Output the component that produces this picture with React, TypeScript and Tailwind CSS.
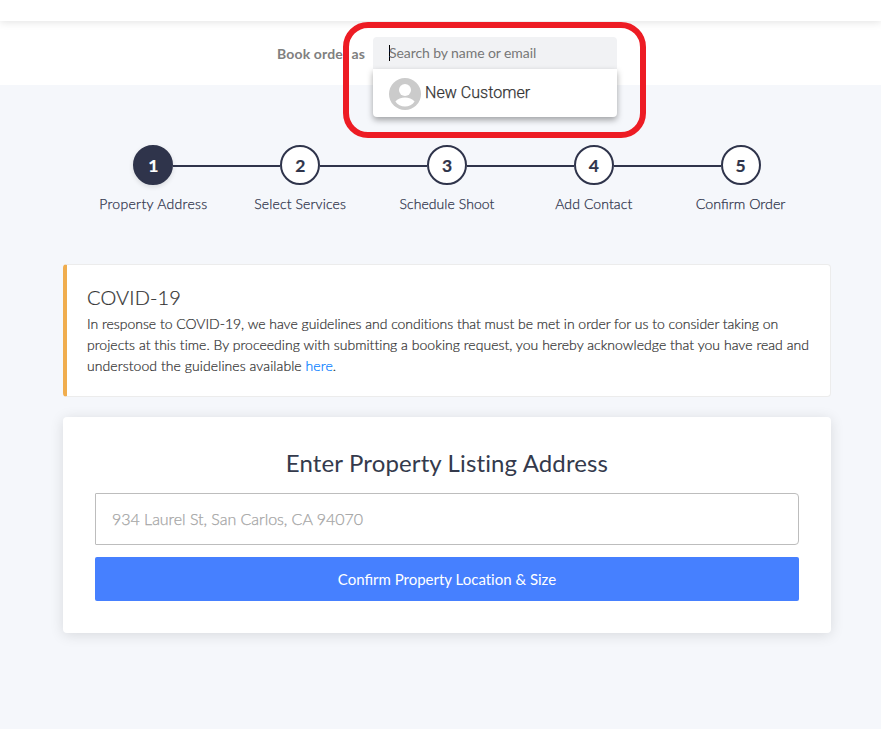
const steps = [
  { label: 'Property Address', type: 'text-sm tracking-[0.32px]' },
  { label: 'Select Services', type: 'text-sm tracking-[0.13px]' },
  { label: 'Schedule Shoot', type: 'text-sm tracking-[0.07px]' },
  { label: 'Add Contact', type: 'text-sm tracking-[0.1px]' },
  { label: 'Confirm Order', type: 'text-[14.3px]' },
];

function TopBar() {
  return <div className="relative z-10 h-[21px] bg-white shadow-[0_1px_8px_rgba(0,0,0,0.12)]" />;
}

function CustomerMenu() {
  return (
    <div className="absolute top-8 left-0 z-20 flex h-12 w-[244px] items-center gap-1 rounded-b bg-white px-4 shadow-[0_3px_6px_rgba(0,0,0,0.35)]">
      <svg viewBox="0 0 32 32" className="mt-px size-8 shrink-0">
        <circle cx="16" cy="16" r="16" fill="#cbcbcb" />
        <circle cx="16" cy="12" r="6" fill="#fff" />
        <path d="M6.4 23.4C8.4 20.5 12.6 19.4 16 19.4s7.6 1.1 9.6 4C23.4 26.7 19.9 28.5 16 28.5s-7.4-1.8-9.6-5.1z" fill="#fff" />
      </svg>
      <span className="font-[Roboto,sans-serif] text-base font-light tracking-[0.05px] text-[#333] [-webkit-text-stroke:0.25px]">
        New Customer
      </span>
    </div>
  );
}

function BookingBar() {
  return (
    <div className="relative flex h-16 items-center bg-white pl-[277px]">
      <span className="mt-0.5 w-24 whitespace-nowrap text-sm font-bold tracking-[0.15px] text-[#808080]">Book order as</span>
      <div className="relative flex h-8 w-[244px] items-center rounded-t bg-[#f1f2f4] pl-4">
        <span className="h-4 w-px bg-black" />
        <span className="-ml-px text-sm tracking-[-0.08px] text-[#777]">Search by name or email</span>
        <CustomerMenu />
      </div>
      <div className="absolute top-px left-[343px] z-30 h-[116px] w-[303px] rounded-[25px] border-6 border-[#ed1c24]" />
    </div>
  );
}

function Stepper() {
  return (
    <div className="mt-[60px] ml-20 grid w-[734px] grid-cols-5">
      {steps.map(({ label, type }, i) => (
        <div key={label} className="flex flex-col items-center">
          <div className="flex w-full items-center">
            <div className={`mt-0.5 h-0.5 flex-1 ${i === 0 ? 'bg-transparent' : 'bg-[#2f344b]'}`} />
            <div
              className={`flex size-10 items-center justify-center rounded-full border-2 border-[#2f344b] pt-0.5 text-[17.5px] font-bold [-webkit-text-stroke:0.2px] ${
                i === 0 ? 'bg-[#2f344b] text-white shadow-[0_2px_5px_rgba(0,0,0,0.12)]' : 'bg-white text-[#2f344b]'
              }`}
            >
              {i + 1}
            </div>
            <div className={`mt-0.5 h-0.5 flex-1 ${i === steps.length - 1 ? 'bg-transparent' : 'bg-[#2f344b]'}`} />
          </div>
          <span className={`mt-[9px] leading-5 font-light whitespace-nowrap text-[#2f344b] [-webkit-text-stroke:0.25px] ${type}`}>
            {label}
          </span>
        </div>
      ))}
    </div>
  );
}

function CovidNotice() {
  return (
    <section className="mt-[50px] h-[133px] rounded border border-l-4 border-[#ececec] border-l-[#f0ad4e] bg-white pt-5 pl-5 font-light text-[#333] [-webkit-text-stroke:0.22px] [font-variant-ligatures:none]">
      <h2 className="text-xl leading-6 tracking-[0.15px]">COVID-19</h2>
      <p className="mt-1 text-sm leading-[21px] whitespace-nowrap">
        <span className="tracking-[-0.02px]">
          In response to COVID-19, we have guidelines and conditions that must be met in order for us to consider taking on
        </span>
        <br />
        <span className="tracking-[0.03px]">
          projects at this time. By proceeding with submitting a booking request, you hereby acknowledge that you have read and
        </span>
        <br />
        <span className="tracking-[0.075px]">
          understood the guidelines available <a className="text-[#007bff]">here</a>.
        </span>
      </p>
    </section>
  );
}

function AddressCard() {
  return (
    <section className="mt-5 h-[216px] rounded bg-white px-8 pt-[31px] shadow-[0_2px_14px_rgba(0,0,0,0.12)]">
      <h1 className="text-center text-2xl leading-[29px] tracking-[0.13px] text-[#343a4c]">
        Enter Property Listing Address
      </h1>
      <input
        placeholder="934 Laurel St, San Carlos, CA 94070"
        className="mt-4 block h-[52px] w-full rounded-l-[1px] rounded-r border border-[#bdbdbd] px-4 pb-0.5 text-base font-light tracking-[-0.03px] [-webkit-text-stroke:0.25px] placeholder:text-[#a4a4a4]"
      />
      <button className="mt-3 block h-11 w-full rounded-xs bg-[#4680ff] text-[15px] text-white">
        Confirm Property <span className="[font-variant-ligatures:none]">Location &amp; Size</span>
      </button>
    </section>
  );
}

export default function App() {
  return (
    <div className="h-[729px] w-[881px] overflow-hidden bg-[#f5f7fb] font-[Lato,sans-serif]">
      <TopBar />
      <BookingBar />
      <Stepper />
      <main className="ml-[63px] w-[768px]">
        <CovidNotice />
        <AddressCard />
      </main>
    </div>
  );
}
